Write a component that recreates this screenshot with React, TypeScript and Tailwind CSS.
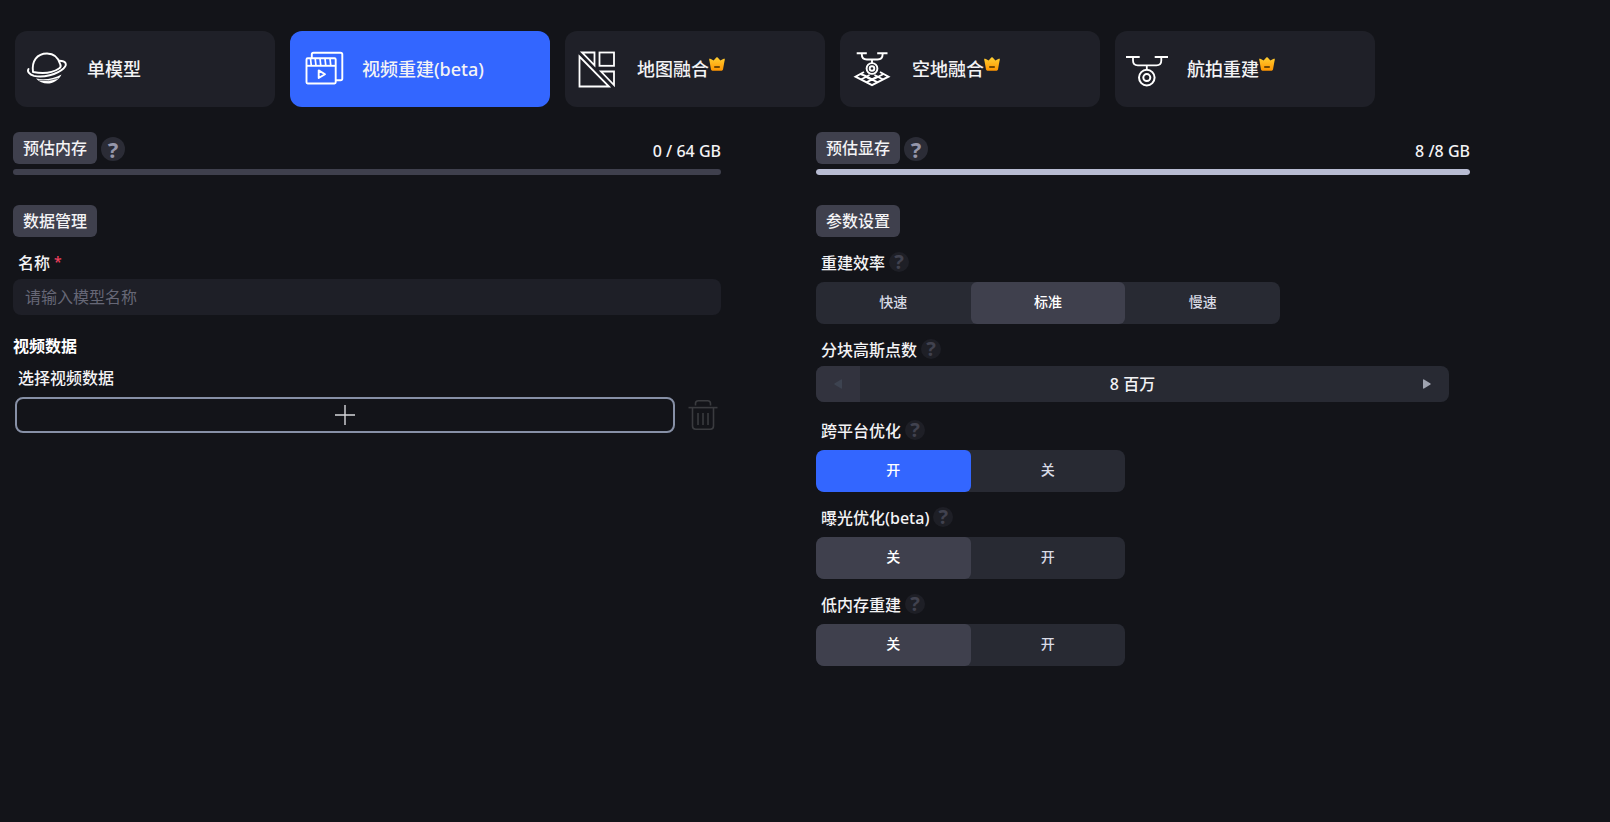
import { useState } from "react";

const tabs = [
  { id: "single", label: "单模型", icon: <PlanetIcon />, vip: false },
  { id: "video", label: "视频重建(beta)", icon: <VideoIcon />, vip: false },
  { id: "map", label: "地图融合", icon: <MapIcon />, vip: true },
  { id: "air-ground", label: "空地融合", icon: <AirGroundIcon />, vip: true },
  { id: "aerial", label: "航拍重建", icon: <DroneIcon />, vip: true },
];

function PlanetIcon() {
  return (
    <svg viewBox="0 0 44 44" className="size-11 shrink-0" fill="none" stroke="#fff" strokeWidth="1.9" strokeLinecap="round">
      <path d="M8 25 C6.5 14 12 6.5 22 6.5 C29 6.5 33.5 11 35.3 17.5 Q36.5 20 34 21.5 C28 25.5 18 27 8 25" />
      <path d="M3.5 22 C1.8 24.5 4.5 27.5 9 28.8 C18 31 32 27.5 38.5 21.5 C43 17 40.5 13.8 34.5 13.7" />
      <path d="M11 31.5 C20 33.5 29 31.5 36.5 27.5 C31 38.5 18 39 11 31.5 Z" fill="#fff" stroke="none" />
      <path d="M14 33.3 Q24 35 33 31.5" stroke="#1f2028" strokeWidth="0.6" />
    </svg>
  );
}

function VideoIcon() {
  return (
    <svg viewBox="0 0 44 44" className="size-11 shrink-0" fill="none" stroke="#fff" strokeWidth="1.9" strokeLinejoin="round">
      <rect x="6.5" y="11.3" width="29.2" height="25.2" rx="1.2" />
      <path d="M11.8 11 V7.5 Q11.8 5.8 13.5 5.8 H40.5 Q42.3 5.8 42.3 7.5 V31.4 Q42.3 33.2 40.5 33.2 H36" />
      <path d="M6.5 18.8 H35.7" />
      <path d="M10.5 11.5 L11.3 18.8 M15.2 11.5 L16 18.8 M20 11.5 L20.8 18.8 M25 11.5 L25.8 18.8 M30 11.5 L30.8 18.8" strokeWidth="1.7" />
      <path d="M18.7 23.4 V31 L25 27.2 Z" />
    </svg>
  );
}

function MapIcon() {
  return (
    <svg viewBox="0 0 44 44" className="size-11 shrink-0" fill="none" stroke="#fff" strokeWidth="1.8">
      <path d="M4.5 9.5 V39.5 H34 Z" />
      <path d="M7 5.5 H19.5 V18.3 Z" />
      <rect x="24.5" y="5.5" width="14.5" height="13.3" />
      <path d="M26 24.5 H39 V38 Z" />
    </svg>
  );
}

function AirGroundIcon() {
  return (
    <svg viewBox="0 0 44 44" className="size-11 shrink-0" fill="none" stroke="#fff" strokeWidth="1.9">
      <path d="M6.7 6.2 H16.8 M27.2 6.2 H37.5" />
      <path d="M11.8 6.2 V7.5 Q11.8 12.5 16.8 12.5 H27.5 Q32.6 12.5 32.6 7.5 V6.2 M22 12.5 V16" />
      <circle cx="22" cy="21.5" r="5.4" />
      <circle cx="22" cy="21.5" r="2.3" />
      <path d="M14 25 L5.5 29.7 L22 38.2 L38.5 29.7 L30 25" />
      <path d="M11 32.5 L19.5 28 M16.5 35.3 L28 29.2 M27.5 35.3 L16 29.2 L10.5 27 M33 32.5 L24.5 28 M33.5 27 L22 33 L17 30.5" />
    </svg>
  );
}

function DroneIcon() {
  return (
    <svg viewBox="0 0 44 44" className="size-11 shrink-0" fill="none" stroke="#fff" strokeWidth="2">
      <path d="M1 10 H14.7 M29.7 10 H43" />
      <path d="M8 10 V13.5 Q8 18.3 12.8 18.3 H31.5 Q36.3 18.3 36.3 13.5 V10 M21.8 18.3 V23" strokeWidth="1.8" />
      <circle cx="21.8" cy="30.6" r="7.8" />
      <circle cx="21.8" cy="30.6" r="3.5" />
    </svg>
  );
}

function CrownIcon() {
  return (
    <svg viewBox="0 0 16 14" className="mt-0.5 h-3.5 w-4">
      <defs>
        <linearGradient id="crown" x1="0" y1="0" x2="0" y2="1">
          <stop offset="0" stopColor="#ffcf33" />
          <stop offset="1" stopColor="#ff9500" />
        </linearGradient>
      </defs>
      <path d="M0.6 1.4 Q-0.2 2.6 0.4 3.6 L2 12.6 Q2.3 13.7 3.3 13.7 H12.7 Q13.7 13.7 14 12.6 L15.6 3.6 Q16.2 2.6 15.4 1.4 Q14 1.6 11.4 3.6 L8.7 0.5 Q8 -0.1 7.3 0.5 L4.6 3.6 Q2 1.6 0.6 1.4 Z" fill="url(#crown)" />
      <rect x="5" y="9.3" width="6" height="1.4" rx="0.7" fill="#4a2c00" />
    </svg>
  );
}

function TrashIcon() {
  return (
    <svg viewBox="0 0 30 30" className="size-[30px]" fill="none" stroke="currentColor" strokeWidth="1.6">
      <path d="M0.5 7.6 H29.5" />
      <path d="M7.5 5.5 V3.5 Q7.5 0.8 10.3 0.8 H19.7 Q22.5 0.8 22.5 3.5 V5.5" />
      <path d="M4.5 7.6 V26 Q4.5 29.2 7.7 29.2 H22.3 Q25.5 29.2 25.5 26 V7.6" />
      <path d="M10 13 V25 M15 13 V25 M20 13 V25" />
    </svg>
  );
}

function Badge({ children }: { children: string }) {
  return <h2 className="flex h-8 items-center rounded-md bg-[#3f404d] px-2.5 text-base font-medium">{children}</h2>;
}

function Meter({ title, value, percent }: { title: string; value: string; percent: number }) {
  return (
    <div>
      <div className="flex items-center">
        <Badge>{title}</Badge>
        <button aria-label={`${title}说明`} className="ml-1 mt-0.5 flex size-6 items-center justify-center rounded-full bg-[#2b2c36] text-[22px] font-bold leading-6 text-[#9596aa]">?</button>
        <span className="ml-auto mt-1.5 font-medium">{value}</span>
      </div>
      <div role="progressbar" aria-label={title} aria-valuenow={percent} className="mt-[5px] h-1.5 overflow-hidden rounded-full bg-[#3f404d]">
        <div className="h-full rounded-full bg-[#b8bcd2]" style={{ width: `${percent}%` }} />
      </div>
    </div>
  );
}

function FieldTitle({ children }: { children: string }) {
  return (
    <div className="flex h-6 items-start pl-[5px]">
      <span className="font-medium leading-[22px]">{children}</span>
      <button aria-label={`${children}说明`} className="ml-1 flex size-5 items-center justify-center rounded-full bg-[#1e1f26] text-xl font-bold leading-5 text-[#41424f]">?</button>
    </div>
  );
}

function Segmented({ label, options, initial, primary, wide }: { label: string; options: string[]; initial: string; primary?: boolean; wide?: boolean }) {
  const [value, setValue] = useState(initial);
  const active = primary ? "bg-[#3366ff] text-white" : "bg-[#3f404d] text-white";
  return (
    <div role="group" aria-label={label} className={`mt-1.5 flex h-[42px] overflow-hidden rounded-lg bg-[#282a33] ${wide ? "max-w-[464px]" : "max-w-[309px]"}`}>
      {options.map((o) => (
        <button
          key={o}
          aria-pressed={o === value}
          onClick={() => setValue(o)}
          className={`flex-1 rounded-md pb-0.5 text-sm font-medium ${o === value ? active : "text-[#d9dbe6]"}`}
        >
          {o}
        </button>
      ))}
    </div>
  );
}

export default function App() {
  const [tab, setTab] = useState("video");
  const [points, setPoints] = useState(8);

  return (
    <div className="min-h-screen bg-[#131419] font-['Noto_Sans','Noto_Sans_CJK_SC',sans-serif] text-base text-[#f3f3f5]">

      {/* MODE TABS */}
      <nav className="flex gap-[15px] px-[15px] pt-[31px]">
        {tabs.map((t) => (
          <button
            key={t.id}
            onClick={() => setTab(t.id)}
            className={`flex h-[76px] w-full max-w-[260px] items-center gap-[18px] rounded-xl pl-2.5 text-lg font-medium ${t.id === tab ? "bg-[#3366ff]" : "bg-[#1f2028]"}`}
          >
            {t.icon}
            <span className="flex items-start whitespace-nowrap">
              {t.label}
              {t.vip && <CrownIcon />}
            </span>
          </button>
        ))}
      </nav>

      <main className="grid grid-cols-[708fr_654fr] gap-x-[95px] pl-[13px] pr-[140px] pt-[25px]">

        {/* DATA */}
        <section>
          <Meter title="预估内存" value="0 / 64 GB" percent={0} />
          <div className="mt-[30px] flex"><Badge>数据管理</Badge></div>

          <label htmlFor="name" className="mt-[15px] flex h-6 gap-1 pl-[5px] font-medium leading-[22px]">
            名称<span className="text-sm leading-5 text-[#f0405e]">*</span>
          </label>
          <input id="name" placeholder="请输入模型名称" className="mt-[3px] block h-9 w-full rounded-lg bg-[#1e1f27] px-3 outline-none placeholder:text-[#666776]" />

          <h3 className="mt-5 h-6 font-bold leading-[22px] text-white">视频数据</h3>
          <p className="mt-2 h-6 pl-[5px] font-medium leading-[22px]">选择视频数据</p>
          <div className="mt-1.5 flex items-center pl-0.5 pr-[3px]">
            <button aria-label="选择视频数据" className="flex h-9 flex-1 items-center justify-center rounded-lg border-2 border-[#8790a6]">
              <svg viewBox="0 0 20 20" className="size-5" stroke="#d6d6da" strokeWidth="1.4">
                <path d="M0 10 H20 M10 0 V20" />
              </svg>
            </button>
            <button aria-label="删除" className="ml-[13px] text-[#3a3b3f]"><TrashIcon /></button>
          </div>
        </section>

        {/* SETTINGS */}
        <section>
          <Meter title="预估显存" value="8 /8 GB" percent={100} />
          <div className="mb-[15px] mt-[30px] flex"><Badge>参数设置</Badge></div>

          <FieldTitle>重建效率</FieldTitle>
          <Segmented label="重建效率" options={["快速", "标准", "慢速"]} initial="标准" wide />

          <div className="mt-[15px]">
            <FieldTitle>分块高斯点数</FieldTitle>
            <div className="mr-[21px] mt-[3px] flex h-9 overflow-hidden rounded-lg bg-[#282a33]">
              <button aria-label="减少" onClick={() => setPoints(points - 1)} className="flex w-11 items-center justify-center bg-[#32333e]">
                <svg viewBox="0 0 8 10" className="h-2.5 w-2" fill="#3d4350"><path d="M8 1 V9 Q8 10 7 9.6 L0.5 5.6 Q0 5 0.5 4.4 L7 0.4 Q8 0 8 1 Z" /></svg>
              </button>
              <span className="flex flex-1 items-center justify-center font-medium">{points} 百万</span>
              <button aria-label="增加" onClick={() => setPoints(points + 1)} className="flex w-11 items-center justify-center">
                <svg viewBox="0 0 8 10" className="h-2.5 w-2" fill="#9fa3b0"><path d="M0 1 V9 Q0 10 1 9.6 L7.5 5.6 Q8 5 7.5 4.4 L1 0.4 Q0 0 0 1 Z" /></svg>
              </button>
            </div>
          </div>

          <div className="mt-[18px] flex flex-col gap-[15px]">
            <div>
              <FieldTitle>跨平台优化</FieldTitle>
              <Segmented label="跨平台优化" options={["开", "关"]} initial="开" primary />
            </div>
            <div>
              <FieldTitle>曝光优化(beta)</FieldTitle>
              <Segmented label="曝光优化" options={["关", "开"]} initial="关" />
            </div>
            <div>
              <FieldTitle>低内存重建</FieldTitle>
              <Segmented label="低内存重建" options={["关", "开"]} initial="关" />
            </div>
          </div>
        </section>
      </main>
    </div>
  );
}
